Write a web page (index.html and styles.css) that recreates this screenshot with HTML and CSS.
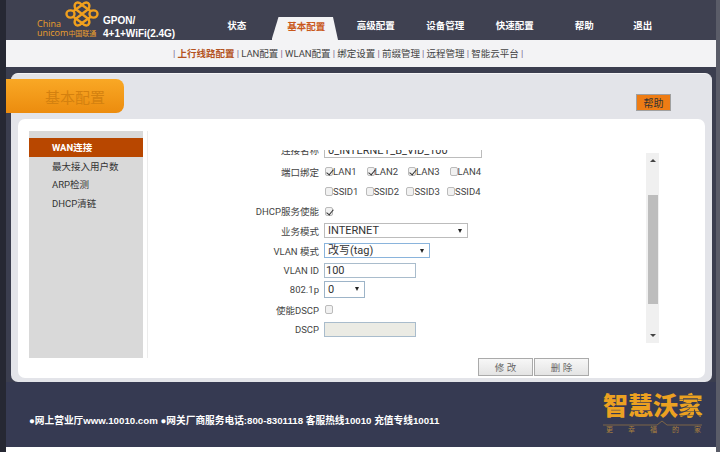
FILE: index.html
```html
<!DOCTYPE html>
<html>
<head>
    <meta charset="utf-8">
    <title>基本配置</title>
    <link rel="stylesheet" href="styles.css">
</head>
<body>
    <div class="page">
        <div class="topbar">
            <div class="brand">
                <div class="brand-text">
                    <span class="brand-china">China</span>
                    <span class="brand-unicom">unicom<small>中国联通</small></span>
                </div>
                <svg class="knot" width="34" height="26" viewBox="0 0 34 26">
                    <g fill="none" stroke="#f0a01e" stroke-width="2.4">
                        <path d="M10.5 8 Q8.5 4 11 2 Q14 .5 17 4 Q20 .5 23 2 Q25.5 4 23.5 8"/>
                        <path d="M10.5 18 Q8.5 22 11 24 Q14 25.5 17 22 Q20 25.5 23 24 Q25.5 22 23.5 18"/>
                        <path d="M10.5 8 L23.5 18 M23.5 8 L10.5 18"/>
                        <path d="M8.5 10 L17 4 L25.5 10 M8.5 16 L17 22 L25.5 16"/>
                        <ellipse cx="5.5" cy="13" rx="4" ry="3.6"/>
                        <ellipse cx="28.5" cy="13" rx="4" ry="3.6"/>
                    </g>
                </svg>
                <div class="product">GPON/<br>4+1+WiFi(2.4G)</div>
            </div>
            <ul class="tabs">
                <li>状态</li>
                <li class="on">基本配置</li>
                <li>高级配置</li>
                <li>设备管理</li>
                <li>快速配置</li>
                <li>帮助</li>
                <li class="last">退出</li>
            </ul>
        </div>

        <div class="subnav">
            <i>|</i> <b>上行线路配置</b> <i>|</i> LAN配置 <i>|</i> WLAN配置 <i>|</i> 绑定设置 <i>|</i> 前缀管理 <i>|</i> 远程管理 <i>|</i> 智能云平台 <i>|</i>
        </div>

        <div class="panel">
            <div class="panel-head">
                <div class="title">基本配置</div>
                <button class="help">帮助</button>
            </div>
            <div class="card">
                <ul class="side">
                    <li class="on">WAN连接</li>
                    <li>最大接入用户数</li>
                    <li>ARP检测</li>
                    <li>DHCP清链</li>
                </ul>
                <div class="main">
                    <div class="scroller">
                        <div class="form">
                            <div class="row clip"><label>连接名称</label><div class="select name">0_INTERNET_B_VID_100<em></em></div></div>
                            <div class="row"><label>端口绑定</label>
                                <span class="opt"><s class="box on"></s>LAN1</span>
                                <span class="opt"><s class="box on"></s>LAN2</span>
                                <span class="opt"><s class="box on"></s>LAN3</span>
                                <span class="opt"><s class="box"></s>LAN4</span>
                            </div>
                            <div class="row"><label></label>
                                <span class="opt ssid"><s class="box"></s>SSID1</span>
                                <span class="opt ssid"><s class="box"></s>SSID2</span>
                                <span class="opt ssid"><s class="box"></s>SSID3</span>
                                <span class="opt ssid"><s class="box"></s>SSID4</span>
                            </div>
                            <div class="row"><label>DHCP服务使能</label><s class="box on"></s></div>
                            <div class="row"><label>业务模式</label><div class="select wide">INTERNET<em></em></div></div>
                            <div class="row"><label>VLAN 模式</label><div class="select mode">改写(tag)<em></em></div></div>
                            <div class="row"><label>VLAN ID</label><div class="input">100</div></div>
                            <div class="row"><label>802.1p</label><div class="select small">0<em></em></div></div>
                            <div class="row"><label>使能DSCP</label><s class="box"></s></div>
                            <div class="row"><label>DSCP</label><div class="input off"></div></div>
                        </div>
                        <div class="scrollbar">
                            <span class="up"></span>
                            <span class="thumb"></span>
                            <span class="down"></span>
                        </div>
                    </div>
                    <div class="actions">
                        <button>修 改</button><button>删 除</button>
                    </div>
                </div>
            </div>
        </div>

        <div class="footer">
            <div class="contact">●网上营业厅www.10010.com ●网关厂商服务电话:800-8301118 客服热线10010 充值专线10011</div>
            <div class="wojia">
                <div class="wojia-name">智慧沃<span>家</span></div>
                <svg class="wojia-line" width="99" height="6" viewBox="0 0 99 6">
                    <path d="M0 5 H54 L59 1 L64 5 H99" fill="none" stroke="#7d6546" stroke-width="1"/>
                </svg>
                <div class="wojia-sub"><span>更</span><span>幸</span><span>福</span><span>的</span><span>家</span></div>
            </div>
        </div>
        <div class="bottom"></div>
    </div>
</body>
</html>
```

FILE: styles.css
```css
* {
    box-sizing: border-box;
}

html, body {
    margin: 0;
    height: 452px;
    overflow: hidden;
    background-color: #3b3e4f;
    font-family: Roboto, "Noto Sans CJK SC", sans-serif;
}

.page {
    width: 720px;
    height: 452px;
    border-left: 6px solid #262833;
    border-right: 4px solid #5a5c68;
    background-color: #3b3e4f;
    display: flex;
    flex-direction: column;
}

/* top bar */
.topbar {
    height: 40px;
    flex: none;
    display: flex;
    background-color: #3f4151;
}

.brand {
    width: 196px;
    flex: none;
    position: relative;
}

.brand-text {
    position: absolute;
    left: 31px;
    top: 19px;
    color: #eb9f2c;
    font-family: "Open Sans", "Noto Sans CJK SC", sans-serif;
    font-size: 9px;
    line-height: 9px;
}

.brand-china {
    display: block;
}

.brand-unicom {
    display: block;
    white-space: nowrap;
}

.brand-unicom small {
    font-size: 7px;
}

.knot {
    position: absolute;
    left: 59px;
    top: 1px;
}

.product {
    position: absolute;
    left: 97px;
    top: 15px;
    color: #fff;
    font-family: "Liberation Sans", sans-serif;
    font-size: 10px;
    font-weight: 700;
    line-height: 12.5px;
    white-space: nowrap;
}

.tabs {
    list-style: none;
    margin: 0;
    padding: 0;
    display: flex;
}

.tabs li {
    width: 69.5px;
    height: 40px;
    padding-top: 19px;
    line-height: 14px;
    text-align: center;
    color: #fff;
    font-size: 9.5px;
    font-weight: 700;
}

.tabs li.on {
    height: 23px;
    margin-top: 17px;
    padding-top: 3px;
    color: #c9581a;
    background-color: #f3f3f5;
    clip-path: polygon(7px 0, calc(100% - 8px) 0, calc(100% - 3px) 100%, 0 100%);
}

.tabs li.last {
    margin-left: -11px;
}

/* second menu line */
.subnav {
    height: 27px;
    flex: none;
    padding-left: 167px;
    background-color: #f3f3f5;
    color: #444;
    font-size: 9.5px;
    line-height: 27px;
    word-spacing: -0.2px;
    white-space: nowrap;
}

.subnav b {
    color: #b4531f;
}

.subnav i {
    font-style: normal;
    color: #7d6a93;
}

/* main panel */
.panel {
    margin: 6px 4px 0 5px;
    height: 309px;
    flex: none;
    padding: 0 7px 4px;
    background-color: #e3e4e9;
    border-top: 1px solid #f4f4f6;
    border-radius: 7px;
    display: flex;
    flex-direction: column;
}

.panel-head {
    height: 45px;
    flex: none;
    position: relative;
}

.title {
    position: absolute;
    left: -12px;
    top: 5px;
    width: 118px;
    height: 34px;
    padding-left: 39px;
    color: #d4810f;
    background: linear-gradient(#f9a825, #ec8c0e);
    border-radius: 0 8px 8px 0;
    font-size: 15px;
    line-height: 38px;
}

.help {
    position: absolute;
    left: 618px;
    top: 20px;
    width: 35px;
    height: 17px;
    padding: 0;
    border: 1px solid #a0a0a0;
    background-color: #ee7c14;
    color: #333;
    font-family: inherit;
    font-size: 10px;
}

.card {
    flex: 1;
    padding: 12px 0 0 11px;
    background-color: #fff;
    border-radius: 7px;
    display: flex;
}

/* left menu */
.side {
    list-style: none;
    margin: 0;
    padding: 7px 0 0;
    width: 114px;
    height: 227px;
    background-color: #d9d9d9;
    font-size: 9.5px;
    color: #333;
}

.side li {
    height: 18.5px;
    padding-left: 23px;
    line-height: 19px;
}

.side li.on {
    background-color: #b84700;
    color: #fff;
    font-weight: 700;
}

.main {
    margin-left: 4px;
    flex: 1;
}

/* settings form */
.scroller {
    height: 227px;
    border-left: 1px solid #ececec;
    display: flex;
}

.form {
    width: 498px;
    height: 193px;
    margin-top: 19px;
    overflow: hidden;
}

.row {
    height: 19.7px;
    display: flex;
    align-items: center;
    font-size: 9.5px;
    color: #444;
    white-space: nowrap;
}

.row.clip {
    margin-top: -7.7px;
    padding-top: 1px;
    align-items: flex-start;
}

.row label {
    width: 171px;
    margin-right: 5px;
    text-align: right;
}

.opt {
    width: 41.5px;
    display: flex;
    align-items: center;
}

.opt.ssid {
    width: 40.7px;
}

.box {
    display: block;
    flex: none;
    width: 8px;
    height: 9px;
    margin-left: 1px;
    border: 1px solid #bbb;
    border-radius: 2px;
    background-color: #f1f1f1;
    position: relative;
}

.box.on::after {
    content: "";
    position: absolute;
    left: 2px;
    top: 0;
    width: 3px;
    height: 6px;
    border: solid #333;
    border-width: 0 1.5px 1.5px 0;
    transform: rotate(40deg);
}

.select, .input {
    flex: none;
    height: 15px;
    border: 1px solid #bcbcbc;
    padding-left: 3px;
    line-height: 14px;
    font-size: 11px;
    color: #333;
    background-color: #fff;
    position: relative;
}

.select em {
    position: absolute;
    right: 5px;
    top: 5px;
    border-style: solid;
    border-width: 4px 2.5px 0;
    border-color: #222 transparent transparent;
}

.name {
    width: 158px;
}

.name em {
    display: none;
}

.wide {
    width: 144px;
}

.mode {
    width: 106px;
    border-color: #8ab4dc;
}

.small {
    width: 41px;
    height: 17px;
    line-height: 16px;
    border-color: #9db4c8;
}

.input {
    width: 92px;
    padding-left: 1px;
    border-color: #a9bccc;
}

.input.off {
    background-color: #ebebe4;
}

.scrollbar {
    width: 13px;
    height: 190px;
    margin-top: 22px;
    background-color: #f0f0f0;
    position: relative;
}

.thumb {
    position: absolute;
    top: 42px;
    left: 2px;
    width: 10px;
    height: 109px;
    background-color: #bdbdbd;
}

.up, .down {
    position: absolute;
    left: 4px;
    border-style: solid;
    border-color: transparent;
}

.up {
    top: 6px;
    border-width: 0 3px 3px;
    border-bottom-color: #444;
}

.down {
    bottom: 6px;
    border-width: 3px 3px 0;
    border-top-color: #444;
}

.actions {
    padding-left: 331px;
    display: flex;
    gap: 1px;
}

.actions button {
    width: 55px;
    height: 18px;
    padding: 0;
    border: 1px solid #aaa;
    background: linear-gradient(#f7f7f7, #e4e4e4);
    color: #666;
    font-family: inherit;
    font-size: 9.5px;
}

/* footer */
.footer {
    flex: 1;
    position: relative;
    background-color: #363a52;
}

.contact {
    position: absolute;
    left: 23px;
    top: 32px;
    color: #fff;
    font-family: "Liberation Sans", "Noto Sans CJK SC", sans-serif;
    font-size: 9.7px;
    font-weight: 700;
    line-height: 14px;
    white-space: nowrap;
}

.wojia {
    position: absolute;
    left: 597px;
    top: 11px;
    width: 99px;
}

.wojia-name {
    color: #eca121;
    font-size: 25px;
    font-weight: 900;
    line-height: 27px;
    white-space: nowrap;
}

/* striped last character of the slogan */
.wojia-name span {
    color: transparent;
    background: repeating-linear-gradient(#eca121 0, #eca121 3px, #8f7038 3px, #8f7038 4px);
    -webkit-background-clip: text;
    background-clip: text;
}

.wojia-line {
    display: block;
}

.wojia-sub {
    display: flex;
    justify-content: space-between;
    padding: 0 1px 0 3px;
    color: #a87f3e;
    font-size: 7px;
    line-height: 9px;
}

.bottom {
    height: 5px;
    flex: none;
    background-color: #fff;
}
```
